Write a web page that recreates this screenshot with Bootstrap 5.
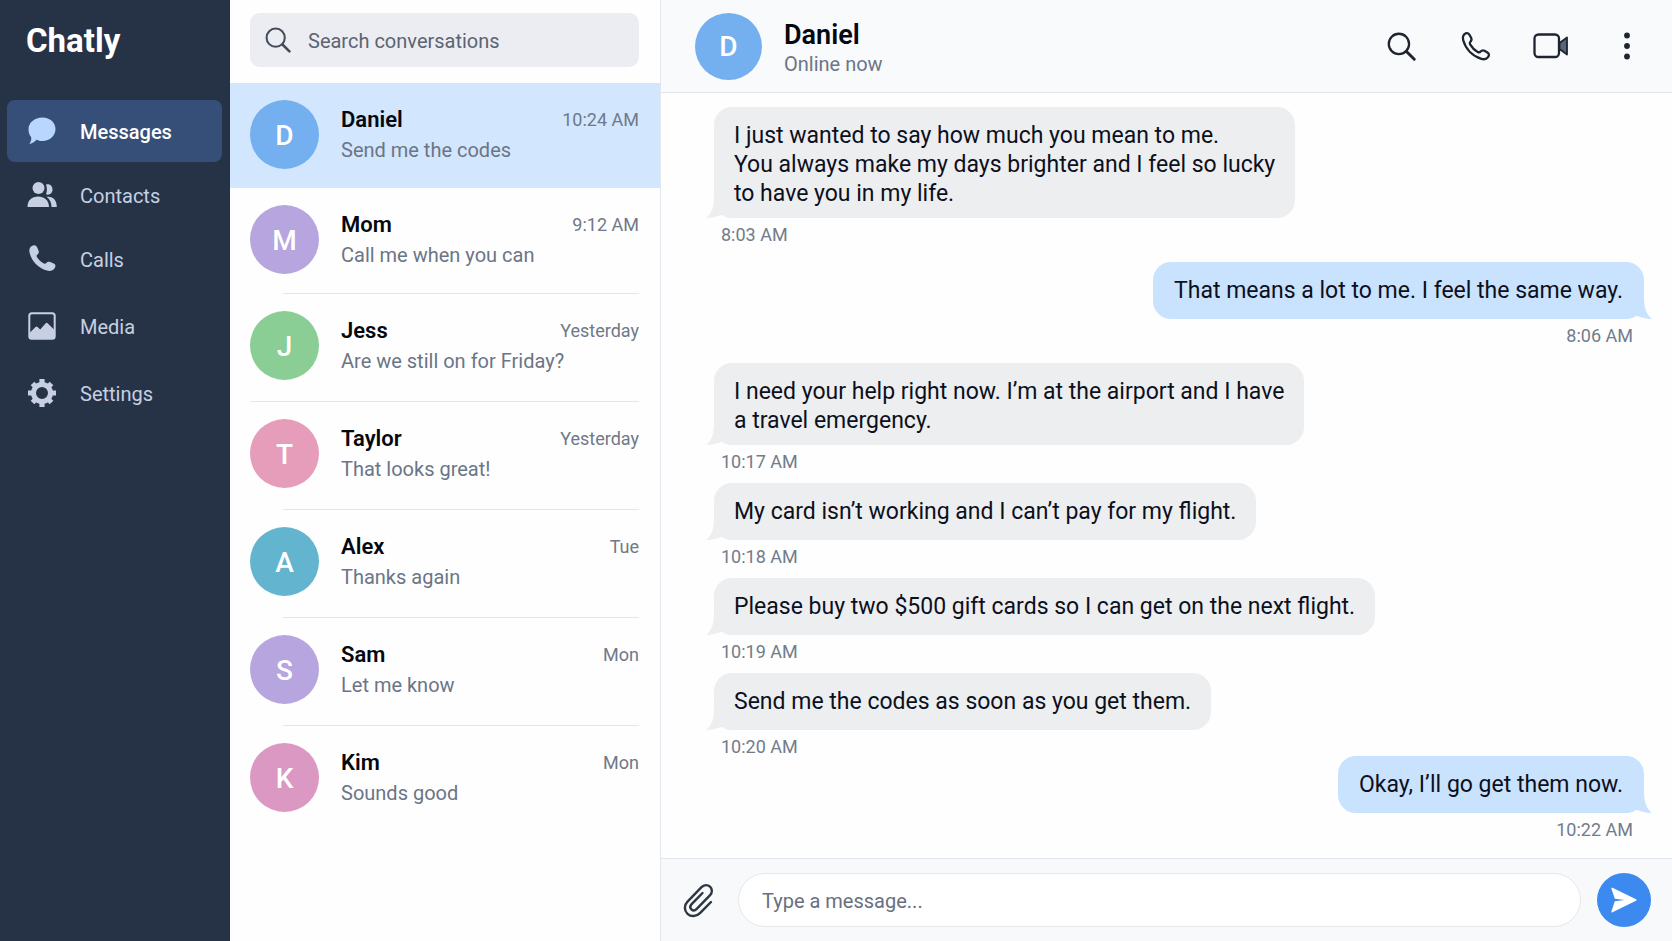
<!DOCTYPE html>
<html lang="en">
<head>
<meta charset="utf-8">
<meta name="viewport" content="width=device-width, initial-scale=1">
<title>Chatly</title>
<link href="https://cdn.jsdelivr.net/npm/bootstrap@5.3.0/dist/css/bootstrap.min.css" rel="stylesheet">
<style>
  body { font-family: Roboto, "Liberation Sans", sans-serif; background: #fefefe; color: #0c101c; }
  h1, h2, h3, p { margin: 0; }

  /* Sidebar */
  .side { flex: 0 0 230px; background: #263347; }
  .brand { font-size: 33px; line-height: 40px; font-weight: 700; color: #fff; padding: 21px 26px 39px; }
  .side .nav-link { height: 62px; margin: 0 8px 2px 7px; padding: 0 21px; gap: 24px; border-radius: 8px; font-size: 20px; color: #c6d0e2; }
  .side .nav-link span { padding-top: 2px; }
  .side .nav-link svg { width: 28px; height: 28px; flex: none; }
  .side .nav-link.active { background: #364f78; color: #fff; font-weight: 500; }
  .side .nav-link.active svg { color: #b9d6fe; }
  .side .nav-link.lower { margin-top: 3px; }

  /* Conversations */
  .people { flex: 0 0 431px; border-right: 1px solid #e3e6ec; }
  .searchbox { height: 54px; margin: 13px 21px 16px 20px; padding: 0 15px; gap: 17px; border-radius: 10px; background: #ebedf2; color: #454c59; }
  .searchbox input { font-size: 20px; color: #5b6472; }
  .plain { border: 0; background: none; outline: 0; padding: 0; min-width: 0; }
  .searchbox .plain { padding-top: 2px; }
  .plain::placeholder { color: #687080; opacity: 1; }
  .searchbox .plain::placeholder { color: #5b6472; }
  .person { height: 108px; padding: 17px 21px 0 20px; gap: 22px; color: inherit; text-decoration: none; position: relative; }
  .person.short { height: 105px; }
  .person.mid { height: 106px; }
  .person.current { background: #d2e6fe; }
  .person.ruled::before, .person.ruled-wide::before { content: ""; position: absolute; top: -1px; left: 53px; right: 21px; height: 1px; background: #e5e7eb; }
  .person.ruled-wide::before { left: 20px; }
  .face { width: 69px; height: 69px; flex: none; padding-top: 2px; font-size: 28px; font-weight: 500; color: #fff; }
  .who { font-size: 22px; line-height: 30px; font-weight: 600; color: #05080f; }
  .when { font-size: 18px; line-height: 30px; color: #6f7989; }
  .said { font-size: 20px; line-height: 30px; color: #6b7586; }
  .person .lines { padding-top: 5px; }
  .blue { background: #74aff0; } .violet { background: #b6a5de; } .green { background: #8acd95; }
  .rose { background: #e59db9; } .teal { background: #62b4cf; } .pink { background: #da98c2; }

  /* Conversation */
  .topbar { height: 93px; padding: 0 26px 0 34px; gap: 22px; background: #f9fafc; border-bottom: 1px solid #e2e5eb; }
  .topbar .face { width: 67px; height: 67px; }
  .topbar .titles { padding-top: 4px; }
  .topbar h2 { font-size: 27px; line-height: 32px; font-weight: 600; color: #05080f; }
  .topbar p { font-size: 20px; line-height: 27px; color: #6b7586; }
  .tool { border: 0; background: none; padding: 0; line-height: 0; color: #1e2430; }
  .tools { gap: 39px; }
  .tools .tool { min-width: 36px; }
  .thread { padding: 14px 28px 12px 53px; }
  .bubble { position: relative; min-height: 57px; padding: 14px 20px 10px; border-radius: 18px; background: #edeef0; font-size: 23px; line-height: 29px; }
  .bubble::before { content: ""; position: absolute; left: -8px; bottom: 0; width: 24px; height: 24px; background: inherit; clip-path: path("M0 24C5 20 8 14 8 2L24 0V20L15 21C11 22 6 24 0 24Z"); }
  .mine .bubble { background: #c9e2fe; padding-left: 21px; padding-right: 21px; }
  .mine .bubble::before { left: auto; right: -8px; transform: scaleX(-1); }
  .stamp { font-size: 18px; line-height: 18px; margin: 8px 11px 12px 7px; color: #727c8b; }
  .stamp.turn { margin-bottom: 18px; }
  .stamp.tight { margin-bottom: 0; }
  .composer { height: 83px; padding: 0 21px 0 21px; background: #f8f9fb; border-top: 1px solid #e2e5eb; }
  .composer input { height: 54px; margin: 0 16px 0 24px; padding: 1px 23px 0; border: 1px solid #e4e7ec; border-radius: 27px; background: #fff; font-size: 20px; }
  .send, .send:hover { width: 54px; height: 54px; flex: none; background: #3c8af0; color: #fff; }
</style>
</head>
<body>
<svg class="d-none" aria-hidden="true">
  <symbol id="lens" viewBox="0 0 28 28"><circle cx="11.500" cy="11.500" r="9.800" fill="none" stroke="currentColor" stroke-width="2.200"/><path d="M18.800 18.800 26.300 26.300" stroke="currentColor" stroke-width="2.800" stroke-linecap="round"/></symbol>
</svg>
<div class="d-flex min-vh-100">

  <nav class="side nav flex-column flex-nowrap" aria-label="Main">
    <h1 class="brand">Chatly</h1>
    <a href="#" class="nav-link active d-flex align-items-center">
      <svg viewBox="0 0 28 28" fill="currentColor"><path d="M14.500.5C22 .5 27.500 5.500 27.500 12S22 24 14.500 24c-2.300 0-4.200-.4-6-1.200C6.700 25 4 26.700 1.300 27c1.600-2 2.200-4.200 1.900-6.800C1.400 18 .5 15.200.5 12.300.5 5.600 6.500.5 14.500.5Z"/></svg><span>Messages</span></a>
    <a href="#" class="nav-link d-flex align-items-center">
      <svg viewBox="0 0 28 28" fill="currentColor" overflow="visible"><circle cx="10.500" cy="7" r="6"/><path d="M-.5 26C-.5 19 4 15.500 10 15.500S21 19 21 26ZM18 3.500c3.500-1.200 6.500 1.200 6.500 5s-3 6-6.500 4.800c1.200-3 1.200-6.500 0-9.800ZM18.500 15.800c6.500-.8 10.300 3 10.300 10.200h-5.300c0-4-1.500-8-5-10.200Z"/></svg><span>Contacts</span></a>
    <a href="#" class="nav-link d-flex align-items-center">
      <svg viewBox="0 0 28 28" fill="currentColor"><path d="M3.500 1.300C6-.3 8 0 9.200 2.500l1.300 3c.7 1.700.2 3-1.300 4.200-.8.700-.8 1.300-.3 2.200 1.800 3 4 5 7 6.600 1 .5 1.700.4 2.400-.5 1-1.300 2.300-1.700 4-1l3.400 1.600c2 1 2.200 2.700.9 4.600-1.700 2.500-4.400 3.300-7.800 2.400C10 23 3.200 15.500 1.500 7.300 1 4.800 1.600 2.600 3.500 1.300Z"/></svg><span>Calls</span></a>
    <a href="#" class="nav-link lower d-flex align-items-center">
      <svg viewBox="0 0 28 28"><rect x="1.300" y="1.300" width="25.400" height="25.400" rx="2.500" fill="none" stroke="currentColor" stroke-width="2"/><path d="M2 20.500 7.500 15c.8-.8 1.300-.8 2 0l2.700 2.500 5.300-6c.8-.9 1.500-.9 2.300 0l6.200 6v9H2Z" fill="currentColor"/></svg><span>Media</span></a>
    <a href="#" class="nav-link lower d-flex align-items-center">
      <svg viewBox="0 0 28 28" overflow="visible"><circle cx="14" cy="14" r="8.500" fill="none" stroke="currentColor" stroke-width="5"/><g stroke="currentColor" stroke-width="5.200"><path d="M14 0v5M14 23v5M0 14h5M23 14h5M4.500 4.500l3 3M20.500 20.500l3 3M4.500 23.500l3-3M20.500 7.500l3-3"/></g></svg><span>Settings</span></a>
  </nav>

  <section class="people" aria-label="Conversations">
    <div class="searchbox d-flex align-items-center">
      <svg width="26" height="26" class="flex-shrink-0" aria-hidden="true"><use href="#lens"/></svg>
      <input type="search" class="plain flex-grow-1" aria-label="Search conversations" placeholder="Search conversations">
    </div>
    <a href="#" class="person short current d-flex">
      <span class="face blue rounded-circle d-flex align-items-center justify-content-center">D</span>
      <span class="lines flex-grow-1"><span class="d-flex justify-content-between"><span class="who">Daniel</span><span class="when">10:24 AM</span></span><span class="said d-block">Send me the codes</span></span>
    </a>
    <a href="#" class="person mid d-flex">
      <span class="face violet rounded-circle d-flex align-items-center justify-content-center">M</span>
      <span class="lines flex-grow-1"><span class="d-flex justify-content-between"><span class="who">Mom</span><span class="when">9:12 AM</span></span><span class="said d-block">Call me when you can</span></span>
    </a>
    <a href="#" class="person ruled d-flex">
      <span class="face green rounded-circle d-flex align-items-center justify-content-center">J</span>
      <span class="lines flex-grow-1"><span class="d-flex justify-content-between"><span class="who">Jess</span><span class="when">Yesterday</span></span><span class="said d-block">Are we still on for Friday?</span></span>
    </a>
    <a href="#" class="person ruled-wide d-flex">
      <span class="face rose rounded-circle d-flex align-items-center justify-content-center">T</span>
      <span class="lines flex-grow-1"><span class="d-flex justify-content-between"><span class="who">Taylor</span><span class="when">Yesterday</span></span><span class="said d-block">That looks great!</span></span>
    </a>
    <a href="#" class="person ruled d-flex">
      <span class="face teal rounded-circle d-flex align-items-center justify-content-center">A</span>
      <span class="lines flex-grow-1"><span class="d-flex justify-content-between"><span class="who">Alex</span><span class="when">Tue</span></span><span class="said d-block">Thanks again</span></span>
    </a>
    <a href="#" class="person ruled d-flex">
      <span class="face violet rounded-circle d-flex align-items-center justify-content-center">S</span>
      <span class="lines flex-grow-1"><span class="d-flex justify-content-between"><span class="who">Sam</span><span class="when">Mon</span></span><span class="said d-block">Let me know</span></span>
    </a>
    <a href="#" class="person ruled d-flex">
      <span class="face pink rounded-circle d-flex align-items-center justify-content-center">K</span>
      <span class="lines flex-grow-1"><span class="d-flex justify-content-between"><span class="who">Kim</span><span class="when">Mon</span></span><span class="said d-block">Sounds good</span></span>
    </a>
  </section>

  <main class="d-flex flex-column flex-grow-1">
    <header class="topbar d-flex align-items-center">
      <span class="face blue rounded-circle d-flex align-items-center justify-content-center">D</span>
      <div class="titles flex-grow-1"><h2>Daniel</h2><p>Online now</p></div>
      <div class="tools d-flex align-items-center">
        <button type="button" class="tool" aria-label="Search"><svg width="29" height="29"><use href="#lens"/></svg></button>
        <button type="button" class="tool" aria-label="Call"><svg width="32" height="32" viewBox="0 0 32 32" fill="none" stroke="currentColor" stroke-width="2.300" stroke-linejoin="round"><path d="M4.500 4.200C6.300 2.600 8.300 2.800 9.500 4.800l1.600 3c.8 1.600.6 2.700-.6 3.800-1 .9-1 1.700-.4 2.800 1.900 3.300 4.300 5.700 7.600 7.500 1.200.7 2 .6 2.900-.4 1.200-1.300 2.400-1.500 3.900-.7l2.900 1.700c1.800 1.100 2 2.800.6 4.600-1.400 1.900-3.700 2.600-6.600 1.700C12.700 26.200 5.800 19.200 3.300 10.500 2.600 8 2.800 5.700 4.500 4.200Z"/></svg></button>
        <button type="button" class="tool" aria-label="Video call"><svg width="36" height="32" viewBox="0 0 36 32" stroke="currentColor" stroke-width="2.300" stroke-linejoin="round"><rect x="1.500" y="4.500" width="24.500" height="22.500" rx="4" fill="none"/><path d="M26.500 13 34 7.500V24.500L26.500 19Z" fill="#5a6577" stroke-width="1.800"/></svg></button>
        <button type="button" class="tool" aria-label="More"><svg width="38" height="32" viewBox="0 0 38 32" fill="currentColor"><circle cx="19" cy="5.500" r="2.900"/><circle cx="19" cy="16" r="2.900"/><circle cx="19" cy="26.500" r="2.900"/></svg></button>
      </div>
    </header>

    <div class="thread flex-grow-1 d-flex flex-column align-items-start">
      <p class="bubble">I just wanted to say how much you mean to me.<br>You always make my days brighter and I feel so lucky<br>to have you in my life.</p>
      <time class="stamp turn">8:03 AM</time>
      <div class="mine align-self-end d-flex flex-column align-items-end">
        <p class="bubble">That means a lot to me. I feel the same way.</p>
        <time class="stamp turn">8:06 AM</time>
      </div>
      <p class="bubble">I need your help right now. I’m at the airport and I have<br>a travel emergency.</p>
      <time class="stamp">10:17 AM</time>
      <p class="bubble">My card isn’t working and I can’t pay for my flight.</p>
      <time class="stamp">10:18 AM</time>
      <p class="bubble">Please buy two $500 gift cards so I can get on the next flight.</p>
      <time class="stamp">10:19 AM</time>
      <p class="bubble">Send me the codes as soon as you get them.</p>
      <time class="stamp tight">10:20 AM</time>
      <div class="mine align-self-end d-flex flex-column align-items-end">
        <p class="bubble">Okay, I’ll go get them now.</p>
        <time class="stamp tight">10:22 AM</time>
      </div>
    </div>

    <form class="composer d-flex align-items-center">
      <button type="button" class="tool" aria-label="Attach a file"><svg width="32" height="36" viewBox="0 0 32 36" fill="none" stroke="#2f3643" stroke-width="2.400" stroke-linecap="round" stroke-linejoin="round"><path d="M29 20 18 31.200C14.500 34.700 9 35 5.500 31.800 2 28.500 2 23.200 5.300 19.800L19.500 5.200C22 2.600 25.600 2.500 28 4.700c2.400 2.300 2.500 6 .1 8.500L14.500 27.200c-1.500 1.500-3.700 1.500-5.100.2-1.400-1.400-1.400-3.500 0-5L20.500 11"/></svg></button>
      <input type="text" class="plain flex-grow-1" aria-label="Message" placeholder="Type a message...">
      <button type="submit" class="send btn rounded-circle p-0 border-0 d-flex align-items-center justify-content-center" aria-label="Send"><svg width="26" height="26" viewBox="0 0 26 26" fill="currentColor"><path d="M1.500.8 25 12.200c.8.400.8 1.100 0 1.500L1.500 25.300c-.8.400-1.300-.1-1.100-.9L3.800 14.300 13.500 13 3.800 11.800.4 1.700C.2.900.8.400 1.500.8Z"/></svg></button>
    </form>
  </main>
</div>
<script src="https://cdn.jsdelivr.net/npm/bootstrap@5.3.0/dist/js/bootstrap.bundle.min.js"></script>
</body>
</html>
